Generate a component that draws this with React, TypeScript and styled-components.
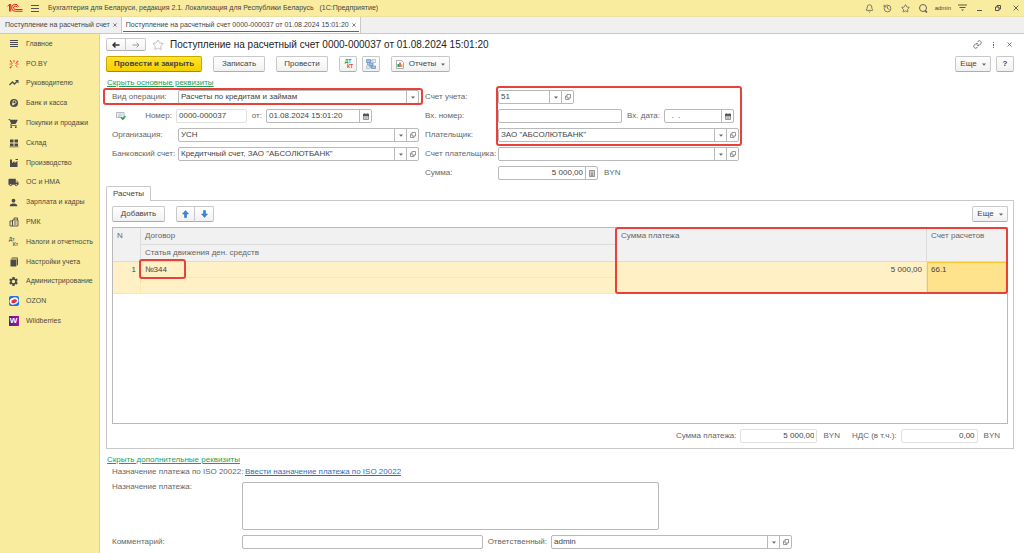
import React from "react";
import styled, { createGlobalStyle, css } from "styled-components";
import { Bell, History, Star, Link } from "lucide-react";
import { MdShoppingCart, MdLocalShipping, MdPerson, MdSettings } from "react-icons/md";

const color = {
  yellow: "#faec9f",
  line: "#c9c9c9",
  field: "#b9b9b9",
  label: "#666666",
  text: "#444444",
  green: "#1e9e5a",
  blue: "#2f6fb5",
  red: "#e8413a",
};

const GlobalStyle = createGlobalStyle`
  *, *::before, *::after { box-sizing: border-box; }
  body { margin: 0; background: #fff; }
  body, button, input, select, textarea {
    font-family: "Liberation Sans", Arial, sans-serif;
    font-size: 8px;
    line-height: 10px;
    color: ${color.text};
  }
  button { padding: 0; cursor: pointer; }
  svg { display: block; flex: none; }
`;

/* ---------- Window frame ---------- */

const Shell = styled.div`
  min-height: 100vh;
  display: flex;
  flex-direction: column;
`;

const TitleBar = styled.header`
  height: 17px;
  padding: 0 3px 0 7px;
  display: flex;
  align-items: center;
  gap: 7px;
  background: ${color.yellow};
  border-bottom: 1px solid #ece0a4;
  font-size: 7px;
  white-space: pre;
`;

const IconButton = styled.button`
  border: 0;
  background: none;
  display: flex;
  align-items: center;
  justify-content: center;
  width: 10px;
  height: 12px;
  color: #555;
`;

const AppTitle = styled.span`
  flex: 1;
  padding-left: 1px;
`;

const WindowTools = styled.div`
  display: flex;
  align-items: center;
  gap: 6px;
  font-size: 6px;
`;

const ToolGroup = styled.div`
  display: flex;
  gap: 8px;
`;

const TabBar = styled.nav`
  height: 17px;
  display: flex;
  background: #f0f0f0;
  border-bottom: 1px solid ${color.line};
`;

const PageTab = styled.div<{ $active?: boolean }>`
  position: relative;
  display: flex;
  align-items: center;
  padding: 0 1px 0 5px;
  font-size: 7px;
  white-space: nowrap;
  border-right: 1px solid ${color.line};
  ${(p) =>
    p.$active &&
    css`
      background: #fff;
      padding-left: 4px;
      &::after {
        content: "";
        position: absolute;
        left: 1px;
        right: 1px;
        bottom: 1px;
        height: 1px;
        background: #0b9a4c;
      }
    `}
  a {
    color: ${color.text};
    text-decoration: none;
  }
`;

const Body = styled.div`
  flex: 1;
  display: flex;
`;

const Sidebar = styled.nav`
  flex: none;
  width: 100px;
  background: ${color.yellow};
  border-right: 1px solid #ddd3a0;
`;

const SectionList = styled.ul`
  list-style: none;
  margin: 0;
  padding: 0;
  min-height: 297px;
  display: flex;
  flex-direction: column;
`;

const Section = styled.li`
  flex: 1;
  display: flex;
  a {
    display: flex;
    align-items: center;
    gap: 7px;
    padding-left: 8px;
    font-size: 7px;
    color: #4d4a3c;
    text-decoration: none;
    white-space: nowrap;
  }
`;

const SectionIcon = styled.span`
  width: 11px;
  height: 11px;
  display: flex;
  align-items: center;
  justify-content: center;
`;

/* ---------- Document form ---------- */

const Main = styled.main`
  flex: 1;
  min-width: 0;
  padding: 4px 10px 4px 6px;
`;

const Bar = styled.div<{ $gap?: number }>`
  display: flex;
  align-items: center;
  gap: ${(p) => p.$gap ?? 11}px;
`;

const Spacer = styled.span`
  flex: 1;
`;

const Title = styled.h1`
  margin: 0;
  font-size: 10px;
  line-height: 13px;
  font-weight: 400;
  color: #222;
  white-space: nowrap;
`;

const CommandBar = styled(Bar)`
  margin-top: 5px;
`;

const buttonFace = css`
  display: flex;
  align-items: center;
  justify-content: center;
  border: 1px solid #c8c8c8;
  border-bottom-color: #adadad;
  background: linear-gradient(#fff, #f1f1f1);
`;

const Button = styled.button<{ $width: number; $primary?: boolean }>`
  ${buttonFace}
  gap: 5px;
  width: ${(p) => p.$width}px;
  height: 16px;
  border-radius: 2px;
  white-space: nowrap;
  ${(p) =>
    p.$primary &&
    css`
      font-weight: 700;
      border-color: #c9a900 #c9a900 #a58b00;
      background: linear-gradient(#fee32a, #f5d000);
    `}
`;

const ButtonPair = styled.div`
  display: flex;
  button:first-child {
    border-radius: 2px 0 0 2px;
  }
  button:last-child {
    border-radius: 0 2px 2px 0;
    border-left: 0;
  }
`;

const StepButton = styled.button<{ $tall?: boolean }>`
  ${buttonFace}
  width: ${(p) => (p.$tall ? 19 : 20)}px;
  height: ${(p) => (p.$tall ? 16 : 13)}px;
`;

const ToggleLink = styled.a`
  display: block;
  width: max-content;
  margin-top: 6px;
  margin-left: 1px;
  color: ${color.green};
`;

const FormColumns = styled.div`
  display: flex;
  gap: 6px;
  margin: 2px 0 0 6px;
`;

const FormColumn = styled.div<{ $width: number }>`
  position: relative;
  width: ${(p) => p.$width}px;
  display: flex;
  flex-direction: column;
  gap: 5px;
`;

const Row = styled.div`
  position: relative;
  display: flex;
  align-items: center;
`;

const Label = styled.label<{ $width?: number; $end?: boolean }>`
  flex: none;
  width: ${(p) => (p.$width ? `${p.$width}px` : "auto")};
  text-align: ${(p) => (p.$end ? "right" : "left")};
  padding-right: ${(p) => (p.$end ? 4 : 0)}px;
  color: ${color.label};
  white-space: nowrap;
`;

const Unit = styled.span`
  margin-left: 6px;
  color: ${color.label};
`;

const FieldBox = styled.div<{ $width?: number; $readOnly?: boolean }>`
  ${(p) => (p.$width ? `flex: none; width: ${p.$width}px;` : "flex: 1;")}
  min-width: 0;
  height: 14px;
  display: flex;
  background: #fff;
  border: 1px solid ${(p) => (p.$readOnly ? "#e0e0e0" : color.field)};
  border-radius: 2px;
`;

const bareControl = css`
  flex: 1;
  width: 0;
  min-width: 0;
  border: 0;
  margin: 0;
  padding: 0 2px;
  background: none;
  outline-offset: 1px;
`;

const Input = styled.input<{ $end?: boolean }>`
  ${bareControl}
  text-align: ${(p) => (p.$end ? "right" : "left")};
`;

const Select = styled.select`
  ${bareControl}
  appearance: none;
`;

const FieldButton = styled.button`
  flex: none;
  width: 12px;
  border: 0;
  border-left: 1px solid ${color.field};
  background: none;
  display: flex;
  align-items: center;
  justify-content: center;
`;

const FieldArrow = styled(FieldButton).attrs({ as: "span" })`
  pointer-events: none;
`;

const Highlight = styled.span<{ $top: number; $left?: number; $right?: number; $width?: number; $height: number }>`
  position: absolute;
  z-index: 1;
  pointer-events: none;
  border: 2px solid ${color.red};
  border-radius: 3px;
  top: ${(p) => p.$top}px;
  height: ${(p) => p.$height}px;
  ${(p) => p.$left !== undefined && `left: ${p.$left}px;`}
  ${(p) => p.$right !== undefined && `right: ${p.$right}px;`}
  ${(p) => p.$width !== undefined && `width: ${p.$width}px;`}
`;

/* ---------- Settlements panel ---------- */

const PanelTab = styled.button`
  position: relative;
  display: block;
  width: 45px;
  height: 15px;
  margin: 6px 0 -1px;
  background: #fff;
  border: 1px solid ${color.line};
  border-bottom: 0;
  border-radius: 2px 2px 0 0;
`;

const Panel = styled.section`
  border: 1px solid ${color.line};
  padding: 5px;
`;

const TableFrame = styled.div`
  position: relative;
  min-height: 197px;
  margin: 5px 0;
  border: 1px solid ${color.field};
`;

const Table = styled.table`
  width: 100%;
  table-layout: fixed;
  border-collapse: separate;
  border-spacing: 0;
  th,
  td {
    padding: 3px 4px;
    vertical-align: top;
    text-align: left;
    font-weight: 400;
    border-right: 1px solid #dcdcdc;
    border-bottom: 1px solid #dcdcdc;
  }
  th {
    height: 17px;
    background: #f1f1f1;
    color: ${color.label};
  }
  td {
    height: 16px;
    padding-bottom: 2px;
    background: #fff1c5;
    border-color: #fbe6ae;
  }
  tr > :last-child:not([data-inner]) {
    border-right: 0;
  }
`;

const NumberCell = styled.td`
  && {
    text-align: right;
  }
`;

const ActiveCell = styled.td`
  && {
    padding: 2px 3px;
    background: #fee28c;
    border: 1px solid #fdc82e;
  }
  tr > &&&:last-child {
    border-right: 1px solid #fdc82e;
  }
`;

const Totals = styled.div`
  display: flex;
  justify-content: flex-end;
  align-items: center;
  gap: 12px;
  padding-right: 8px;
`;

const TotalGroup = styled.div`
  display: flex;
  align-items: center;
`;

/* ---------- Extra details ---------- */

const Extra = styled.div`
  padding-left: 6px;
`;

const ExtraRow = styled(Row)<{ $gap: number; $top?: boolean }>`
  margin-top: ${(p) => p.$gap}px;
  align-items: ${(p) => (p.$top ? "flex-start" : "center")};
`;

const IsoLink = styled.a`
  color: ${color.blue};
`;

const TextArea = styled.textarea`
  width: 417px;
  height: 48px;
  border: 1px solid ${color.field};
  border-radius: 2px;
  padding: 2px;
  resize: none;
`;

/* ---------- Icons ---------- */

const Logo = () => (
  <svg width="16" height="10" viewBox="0 0 32 20" fill="none" stroke="#e2231a" strokeWidth="2">
    <path d="M1 6.500 5 3V17M4.500 3h3V17" />
    <path d="M23 7.500A7 7 0 1 0 17 16.500H31" />
    <path d="M20 8.500A3.500 3.500 0 1 0 17 13H31" />
  </svg>
);

const Lines = () => (
  <svg width="8" height="8" viewBox="0 0 8 8" stroke="#555">
    <path d="M0 1.500h8M0 4.500h8M0 7.500h8" />
  </svg>
);

const Arrow = ({ back, muted }: { back?: boolean; muted?: boolean }) => (
  <svg width="8" height="8" viewBox="0 0 16 16" fill="none" stroke={muted ? "#999" : "#333"} strokeWidth={muted ? 2 : 3}>
    {back ? <path d="M15 8H2M7 3 2 8l5 5" /> : <path d="M1 8h13M9 3l5 5-5 5" />}
  </svg>
);

const Caret = () => (
  <svg width="4" height="3" viewBox="0 0 4 3" fill="#666">
    <path d="M0 .5h4L2 2.700Z" />
  </svg>
);

const OpenIcon = () => (
  <svg width="6" height="6" viewBox="0 0 12 12" fill="none" stroke="#777" strokeWidth="1.500">
    <path d="M4 1h7v7H4ZM4 4H1v7h7V8" />
  </svg>
);

const CalendarIcon = () => (
  <svg width="6" height="7" viewBox="0 0 12 14">
    <path d="M1 3h10v10H1Z" fill="#ddd" stroke="#777" strokeWidth="1.500" />
    <path d="M0 2h12v4H0ZM3 0v3M9 0v3" fill="#555" stroke="#555" />
    <path d="M3 9h6M3 11h6" stroke="#999" />
  </svg>
);

const CalcIcon = () => (
  <svg width="6" height="7" viewBox="0 0 12 14" fill="#e6e6e6" stroke="#777" strokeWidth="1.500">
    <path d="M1 1h10v12H1ZM3 4h6M3 7.500h6M3 10.500h6M6 7v5" />
  </svg>
);

const Cross = ({ size = 6, tone = "#555" }: { size?: number; tone?: string }) => (
  <svg width={size} height={size} viewBox="0 0 10 10" stroke={tone} strokeWidth="1.500">
    <path d="M1 1l8 8M9 1 1 9" />
  </svg>
);

const SearchIcon = () => (
  <svg width="9" height="9" viewBox="0 0 18 18" fill="none" stroke="#555" strokeWidth="1.800">
    <circle cx="8" cy="8" r="7" />
    <path d="M12 13l4 4" strokeWidth="3" />
  </svg>
);

const PanelMenuIcon = () => (
  <svg width="9" height="8" viewBox="0 0 18 16" stroke="#555" strokeWidth="2">
    <path d="M0 2h18M3 7h12" />
    <path d="M6 11h6l-3 3Z" fill="#555" stroke="none" />
  </svg>
);

const MinimizeIcon = () => (
  <svg width="6" height="8" viewBox="0 0 6 8" stroke="#555">
    <path d="M0 6.500h5" />
  </svg>
);

const RestoreIcon = () => (
  <svg width="6" height="6" viewBox="0 0 12 12" fill="none" stroke="#444" strokeWidth="1.800">
    <path d="M1 4h7v7H1ZM4 4V1h7v7H8" />
  </svg>
);

const DotsIcon = () => (
  <svg width="3" height="8" viewBox="0 0 3 8" fill="#666">
    <path d="M1 1h1v1H1ZM1 3h1v2H1ZM1 6h1v1H1Z" />
  </svg>
);

const PostedIcon = () => (
  <svg width="10" height="8" viewBox="0 0 20 16" fill="none">
    <path d="M1 1h15v10H1Z" fill="#f4f6f8" stroke="#9aa5ad" strokeWidth="1.500" />
    <path d="M4 4h9M4 6.500h9M4 9h5" stroke="#9aa5ad" />
    <path d="M10 10.500l3.500 4L19 8" stroke="#22a54a" strokeWidth="3" />
  </svg>
);

const StructureIcon = () => (
  <svg width="10" height="10" viewBox="0 0 20 20" fill="#a9c3df" stroke="#5f8bbb" strokeWidth="1.400">
    <path d="M3 6v6h4M9 13v4h4M9 3h7v5" fill="none" />
    <path d="M1 1h8v6H1ZM6 8h8v5H6ZM11 14h8v5h-8Z" />
    <path d="M12 1h7v6h-7ZM1 14h7v5H1Z" fill="#e4edf6" stroke="#9db8d5" />
  </svg>
);

const ReportIcon = () => (
  <svg width="8" height="9" viewBox="0 0 16 18" fill="none">
    <path d="M1 1h10l4 4v12H1Z" fill="#fff" stroke="#8d99a3" strokeWidth="1.500" />
    <path d="M4.500 14V8" stroke="#2a9d4b" strokeWidth="3" />
    <path d="M8 14V5" stroke="#e8413a" strokeWidth="3" />
    <path d="M11.500 14V9" stroke="#e6a21a" strokeWidth="3" />
  </svg>
);

const BlueArrow = ({ down }: { down?: boolean }) => (
  <svg width="7" height="8" viewBox="0 0 14 16" fill="#3d87dc" stroke="#1f63b5">
    {down ? <path d="M5 1h4v7h4l-6 7-6-7h4Z" /> : <path d="M5 15h4V8h4L7 1 1 8h4Z" />}
  </svg>
);

const DtKt = styled.span<{ $mono?: boolean }>`
  display: grid;
  font-size: 5px;
  line-height: 5px;
  font-weight: 700;
  text-transform: ${(p) => (p.$mono ? "none" : "uppercase")};
  b {
    color: ${(p) => (p.$mono ? "#666" : "#2a9d4b")};
  }
  i {
    padding-left: 4px;
    font-style: normal;
    color: ${(p) => (p.$mono ? "#666" : "#e8413a")};
  }
`;

const BrandW = styled.span`
  width: 10px;
  height: 10px;
  display: flex;
  align-items: center;
  justify-content: center;
  background: linear-gradient(90deg, #5b1a8f, #a01aa0);
  color: #fff;
  font-size: 8px;
  font-weight: 700;
`;

const Glyph = ({ children }: { children: React.ReactNode }) => (
  <svg width="10" height="10" viewBox="0 0 20 20" fill="#4a4a4a" stroke="none">
    {children}
  </svg>
);

const sections: { name: string; icon: React.ReactNode }[] = [
  { name: "Главное", icon: <Glyph><path d="M2 2h16v2H2ZM2 6h16v2H2ZM2 10h16v2H2ZM2 14h16v2H2Z" /></Glyph> },
  {
    name: "PO.BY",
    icon: (
      <Glyph>
        <g stroke="#e8413a" strokeWidth="1.800" fill="none">
          <path d="M10 7V2M13 9l4-4M13 12l4 5M7 12l-4 5M7 9 3 4M6 10H1M14 10h5" />
          <circle cx="3" cy="4" r="1" />
          <circle cx="17" cy="5" r="1" />
          <circle cx="3" cy="17" r="1" />
        </g>
      </Glyph>
    ),
  },
  { name: "Руководителю", icon: <Glyph><path d="M1 14l6-6 4 4 5-5" fill="none" stroke="#4a4a4a" strokeWidth="2.500" /><path d="M12 4h7v7Z" /></Glyph> },
  {
    name: "Банк и касса",
    icon: (
      <Glyph>
        <circle cx="10" cy="10" r="8" />
        <path d="M8 15V5.500h3.500a2.500 2.500 0 0 1 0 5.500H6M6 13h5" fill="none" stroke="#faec9f" strokeWidth="1.600" />
      </Glyph>
    ),
  },
  { name: "Покупки и продажи", icon: <MdShoppingCart size={11} color="#4a4a4a" /> },
  { name: "Склад", icon: <Glyph><path d="M2 3h7v6H2ZM11 3h7v6h-7ZM2 11h7v5H2ZM11 11h7v5h-7ZM1 17h18v1.500H1Z" /></Glyph> },
  { name: "Производство", icon: <Glyph><path d="M2 18V3h4v7l5-4v4l6-4v12ZM13 2h5v2h-5Z" /></Glyph> },
  { name: "ОС и НМА", icon: <MdLocalShipping size={11} color="#4a4a4a" /> },
  { name: "Зарплата и кадры", icon: <MdPerson size={11} color="#4a4a4a" /> },
  {
    name: "РМК",
    icon: (
      <Glyph>
        <g fill="none" stroke="#4a4a4a" strokeWidth="1.800">
          <path d="M2 8h5v10H2ZM7 6h11v12H7ZM10 6V2h7v4M10 10h5M10 14h5" />
        </g>
      </Glyph>
    ),
  },
  { name: "Налоги и отчетность", icon: <DtKt $mono><b>Дт</b><i>Кт</i></DtKt> },
  { name: "Настройки учета", icon: <Glyph><path d="M3 5h11v14H3ZM4 3l2-2h12l-2 2ZM15 5l3-3v13l-3 4Z" /></Glyph> },
  { name: "Администрирование", icon: <MdSettings size={11} color="#4a4a4a" /> },
  {
    name: "OZON",
    icon: (
      <Glyph>
        <rect width="20" height="20" rx="4" fill="#1f6fe8" />
        <ellipse cx="10" cy="10" rx="9" ry="7" fill="#fff" transform="rotate(-20 10 10)" />
        <ellipse cx="10" cy="10.500" rx="6" ry="3.500" fill="#ec2b3c" transform="rotate(-20 10 10)" />
      </Glyph>
    ),
  },
  { name: "Wildberries", icon: <BrandW aria-hidden>W</BrandW> },
];

/* ---------- Field helpers ---------- */

type ChoiceProps = { id: string; value: string; width?: number; open?: boolean };

const Choice = ({ id, value, width, open = true }: ChoiceProps) => (
  <FieldBox $width={width}>
    <Select id={id} defaultValue={value}>
      <option value={value}>{value}</option>
    </Select>
    <FieldArrow><Caret /></FieldArrow>
    {open && <FieldButton type="button" aria-label="Открыть"><OpenIcon /></FieldButton>}
  </FieldBox>
);

type TextFieldProps = {
  id: string;
  value?: string;
  width?: number;
  end?: boolean;
  readOnly?: boolean;
  action?: React.ReactNode;
};

const TextField = ({ id, value = "", width, end, readOnly, action }: TextFieldProps) => (
  <FieldBox $width={width} $readOnly={readOnly}>
    <Input id={id} defaultValue={value} $end={end} readOnly={readOnly} />
    {action && <FieldButton type="button" aria-label="Выбрать">{action}</FieldButton>}
  </FieldBox>
);

const PostedMark = styled.span`
  width: 15px;
  padding-left: 4px;
`;

export default function App() {
  return (
    <Shell>
      <GlobalStyle />
      <TitleBar>
        <Logo />
        <IconButton aria-label="Меню"><Lines /></IconButton>
        <AppTitle>Бухгалтерия для Беларуси, редакция 2.1. Локализация для Республики Беларусь{"   "}(1С:Предприятие)</AppTitle>
        <WindowTools>
          <ToolGroup>
            <IconButton aria-label="Уведомления"><Bell size={9} /></IconButton>
            <IconButton aria-label="История"><History size={9} /></IconButton>
            <IconButton aria-label="Избранное"><Star size={9} /></IconButton>
            <IconButton aria-label="Поиск"><SearchIcon /></IconButton>
          </ToolGroup>
          <span>admin</span>
          <ToolGroup>
            <IconButton aria-label="Настройка панелей"><PanelMenuIcon /></IconButton>
            <IconButton aria-label="Свернуть"><MinimizeIcon /></IconButton>
            <IconButton aria-label="Восстановить"><RestoreIcon /></IconButton>
            <IconButton aria-label="Закрыть"><Cross /></IconButton>
          </ToolGroup>
        </WindowTools>
      </TitleBar>

      <TabBar>
        <PageTab>
          <a href="#list">Поступление на расчетный счет</a>
          <IconButton aria-label="Закрыть вкладку"><Cross size={4} tone="#333" /></IconButton>
        </PageTab>
        <PageTab $active>
          <a href="#document">Поступление на расчетный счет 0000-000037 от 01.08.2024 15:01:20</a>
          <IconButton aria-label="Закрыть вкладку"><Cross size={4} tone="#333" /></IconButton>
        </PageTab>
      </TabBar>

      <Body>
        <Sidebar>
          <SectionList>
            {sections.map((s) => (
              <Section key={s.name}>
                <a href="#section">
                  <SectionIcon>{s.icon}</SectionIcon>
                  {s.name}
                </a>
              </Section>
            ))}
          </SectionList>
        </Sidebar>

        <Main>
          <Bar $gap={6}>
            <ButtonPair>
              <StepButton aria-label="Назад"><Arrow back /></StepButton>
              <StepButton aria-label="Вперед"><Arrow muted /></StepButton>
            </ButtonPair>
            <Star size={12} color="#aaa" strokeWidth={1.5} />
            <Title>Поступление на расчетный счет 0000-000037 от 01.08.2024 15:01:20</Title>
            <Spacer />
            <IconButton aria-label="Ссылка"><Link size={9} /></IconButton>
            <IconButton aria-label="Еще действия"><DotsIcon /></IconButton>
            <IconButton aria-label="Закрыть"><Cross size={5} /></IconButton>
          </Bar>

          <CommandBar>
            <Button $width={96} $primary>Провести и закрыть</Button>
            <Button $width={52}>Записать</Button>
            <Button $width={52}>Провести</Button>
            <Bar $gap={5}>
              <Button $width={18} aria-label="Дт Кт"><DtKt><b>Дт</b><i>Кт</i></DtKt></Button>
              <Button $width={18} aria-label="Структура"><StructureIcon /></Button>
            </Bar>
            <Button $width={59}><ReportIcon />Отчеты<Caret /></Button>
            <Spacer />
            <Bar $gap={5}>
              <Button $width={36}>Еще<Caret /></Button>
              <Button $width={18}><b>?</b></Button>
            </Bar>
          </CommandBar>

          <ToggleLink href="#main-details">Скрыть основные реквизиты</ToggleLink>

          <FormColumns>
            <FormColumn $width={307}>
              <Row>
                <Label htmlFor="kind" $width={66}>Вид операции:</Label>
                <Choice id="kind" value="Расчеты по кредитам и займам" open={false} />
                <Highlight $top={-2} $left={-9} $right={-4} $height={17} />
              </Row>
              <Row>
                <PostedMark><PostedIcon /></PostedMark>
                <Label htmlFor="number" $width={49} $end>Номер:</Label>
                <TextField id="number" value="0000-000037" width={71} readOnly />
                <Label htmlFor="date" $width={19} $end>от:</Label>
                <TextField id="date" value="01.08.2024 15:01:20" width={106} action={<CalendarIcon />} />
              </Row>
              <Row>
                <Label htmlFor="org" $width={66}>Организация:</Label>
                <Choice id="org" value="УСН" />
              </Row>
              <Row>
                <Label htmlFor="bank" $width={66}>Банковский счет:</Label>
                <Choice id="bank" value={'Кредитчный счет, ЗАО "АБСОЛЮТБАНК"'} />
              </Row>
            </FormColumn>

            <FormColumn $width={314}>
              <Row>
                <Label htmlFor="account" $width={73}>Счет учета:</Label>
                <Choice id="account" value="51" width={76} />
              </Row>
              <Row>
                <Label htmlFor="in-number" $width={73}>Вх. номер:</Label>
                <TextField id="in-number" width={124} />
                <Label htmlFor="in-date" $width={42} $end>Вх. дата:</Label>
                <TextField id="in-date" value="  .  ." width={70} action={<CalendarIcon />} />
              </Row>
              <Row>
                <Label htmlFor="payer" $width={73}>Плательщик:</Label>
                <Choice id="payer" value={'ЗАО "АБСОЛЮТБАНК"'} />
              </Row>
              <Row>
                <Label htmlFor="payer-account" $width={73}>Счет плательщика:</Label>
                <Choice id="payer-account" value="" />
              </Row>
              <Row>
                <Label htmlFor="sum" $width={73}>Сумма:</Label>
                <TextField id="sum" value="5 000,00" width={100} end action={<CalcIcon />} />
                <Unit>BYN</Unit>
              </Row>
              <Highlight $top={-4} $left={71} $right={-3} $height={60} />
            </FormColumn>
          </FormColumns>

          <PanelTab>Расчеты</PanelTab>
          <Panel>
            <Bar>
              <Button $width={53}>Добавить</Button>
              <ButtonPair>
                <StepButton $tall aria-label="Вверх"><BlueArrow /></StepButton>
                <StepButton $tall aria-label="Вниз"><BlueArrow down /></StepButton>
              </ButtonPair>
              <Spacer />
              <Button $width={36}>Еще<Caret /></Button>
            </Bar>

            <TableFrame>
              <Table>
                <colgroup>
                  <col width="28" />
                  <col />
                  <col width="310" />
                  <col width="80" />
                </colgroup>
                <thead>
                  <tr>
                    <th rowSpan={2}>N</th>
                    <th>Договор</th>
                    <th rowSpan={2}>Сумма платежа</th>
                    <th rowSpan={2}>Счет расчетов</th>
                  </tr>
                  <tr>
                    <th data-inner>Статья движения ден. средств</th>
                  </tr>
                </thead>
                <tbody>
                  <tr>
                    <NumberCell rowSpan={2}>1</NumberCell>
                    <td>№344</td>
                    <NumberCell rowSpan={2}>5 000,00</NumberCell>
                    <ActiveCell rowSpan={2}>66.1</ActiveCell>
                  </tr>
                  <tr>
                    <td data-inner />
                  </tr>
                </tbody>
              </Table>
              <Highlight $top={31} $left={26} $width={47} $height={20} />
              <Highlight $top={-1} $right={-1} $width={393} $height={67} />
            </TableFrame>

            <Totals>
              <TotalGroup>
                <Label htmlFor="total" $end>Сумма платежа:</Label>
                <TextField id="total" value="5 000,00" width={77} end readOnly />
                <Unit>BYN</Unit>
              </TotalGroup>
              <TotalGroup>
                <Label htmlFor="vat" $end>НДС (в т.ч.):</Label>
                <TextField id="vat" value="0,00" width={77} end readOnly />
                <Unit>BYN</Unit>
              </TotalGroup>
            </Totals>
          </Panel>

          <ToggleLink href="#extra-details">Скрыть дополнительные реквизиты</ToggleLink>
          <Extra>
            <ExtraRow $gap={2}>
              <Label as="span" $width={133}>Назначение платежа по ISO 20022:</Label>
              <IsoLink href="#iso">Ввести назначение платежа по ISO 20022</IsoLink>
            </ExtraRow>
            <ExtraRow $gap={5} $top>
              <Label htmlFor="purpose" $width={130}>Назначение платежа:</Label>
              <TextArea id="purpose" />
            </ExtraRow>
            <ExtraRow $gap={5}>
              <Label htmlFor="comment" $width={130}>Комментарий:</Label>
              <TextField id="comment" width={241} />
              <Label htmlFor="owner" $width={68} $end>Ответственный:</Label>
              <Choice id="owner" value="admin" width={241} />
            </ExtraRow>
          </Extra>
        </Main>
      </Body>
    </Shell>
  );
}
